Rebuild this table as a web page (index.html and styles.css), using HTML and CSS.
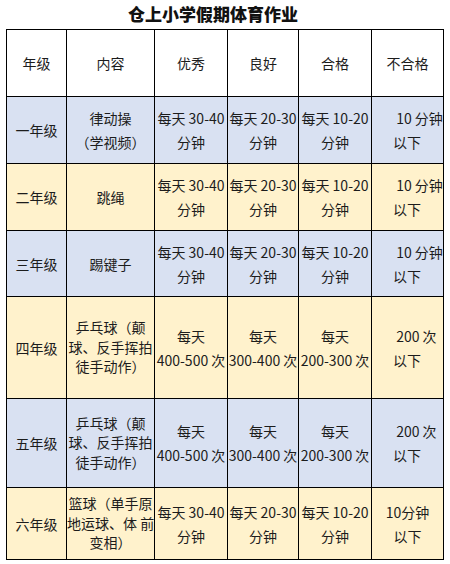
FILE: index.html
```html
<!DOCTYPE html>
<html lang="zh">
<head>
<meta charset="utf-8">
<title>仓上小学假期体育作业</title>
<link rel="stylesheet" href="styles.css">
</head>
<body>
<h1 class="title">仓上小学假期体育作业</h1>
<table class="grid">
  <colgroup>
    <col class="c1"><col class="c2"><col class="c3"><col class="c4"><col class="c5"><col class="c6">
  </colgroup>
  <tr class="head">
    <td>年级</td><td>内容</td><td>优秀</td><td>良好</td><td>合格</td><td>不合格</td>
  </tr>
  <tr class="blue r1">
    <td>一年级</td>
    <td>律动操<br>（学视频）</td>
    <td>每天 30-40<br>分钟</td>
    <td>每天 20-30<br>分钟</td>
    <td>每天 10-20<br>分钟</td>
    <td class="left">&nbsp;10 分钟<br>以下</td>
  </tr>
  <tr class="cream r2">
    <td>二年级</td>
    <td>跳绳</td>
    <td>每天 30-40<br>分钟</td>
    <td>每天 20-30<br>分钟</td>
    <td>每天 10-20<br>分钟</td>
    <td class="left">&nbsp;10 分钟<br>以下</td>
  </tr>
  <tr class="blue r3">
    <td>三年级</td>
    <td>踢键子</td>
    <td>每天 30-40<br>分钟</td>
    <td>每天 20-30<br>分钟</td>
    <td>每天 10-20<br>分钟</td>
    <td class="left">&nbsp;10 分钟<br>以下</td>
  </tr>
  <tr class="cream r4">
    <td>四年级</td>
    <td class="tight">乒乓球（颠<br>球、反手挥拍<br>徒手动作）</td>
    <td>每天<br>400-500 次</td>
    <td>每天<br>300-400 次</td>
    <td>每天<br>200-300 次</td>
    <td class="left">&nbsp;200 次<br>以下</td>
  </tr>
  <tr class="blue r5">
    <td>五年级</td>
    <td class="tight">乒乓球（颠<br>球、反手挥拍<br>徒手动作）</td>
    <td>每天<br>400-500 次</td>
    <td>每天<br>300-400 次</td>
    <td>每天<br>200-300 次</td>
    <td class="left">&nbsp;200 次<br>以下</td>
  </tr>
  <tr class="cream r6">
    <td>六年级</td>
    <td class="tight">篮球（单手原<br>地运球、体 前<br>变相）</td>
    <td>每天 30-40<br>分钟</td>
    <td>每天 20-30<br>分钟</td>
    <td>每天 10-20<br>分钟</td>
    <td>10分钟<br>以下</td>
  </tr>
</table>
</body>
</html>
```

FILE: styles.css
```css
html, body {
  margin: 0;
  padding: 0;
  background: #ffffff;
}
body {
  font-family: "Noto Sans CJK SC", "Noto Sans", sans-serif;
  color: #1c1c1c;
}
.title {
  margin: 0;
  padding-right: 24px;
  height: 29px;
  line-height: 27px;
  font-size: 17px;
  font-weight: 900;
  text-align: center;
  color: #111111;
}
.grid {
  margin-left: 6px;
  width: 437px;
  border-collapse: collapse;
  table-layout: fixed;
  font-size: 14px;
}
.c1 { width: 60px; }
.c2 { width: 88px; }
.c3 { width: 73px; }
.c4 { width: 71px; }
.c5 { width: 73px; }
.c6 { width: 72px; }
.grid td {
  border: 1px solid #000000;
  padding: 0;
  text-align: center;
  vertical-align: middle;
  line-height: 24px;
  white-space: nowrap;
  overflow: hidden;
}
.grid td.tight {
  line-height: 19.5px;
}
.grid td.left {
  text-align: left;
  padding-left: 21px;
}
.head { height: 67px; background: #ffffff; }
.blue { background: #d9e1f2; }
.cream { background: #fff2cc; }
.r1 { height: 67px; }
.r2 { height: 67px; }
.r3 { height: 66px; }
.r4 { height: 102px; }
.r5 { height: 89px; }
.r6 { height: 72px; }
```
